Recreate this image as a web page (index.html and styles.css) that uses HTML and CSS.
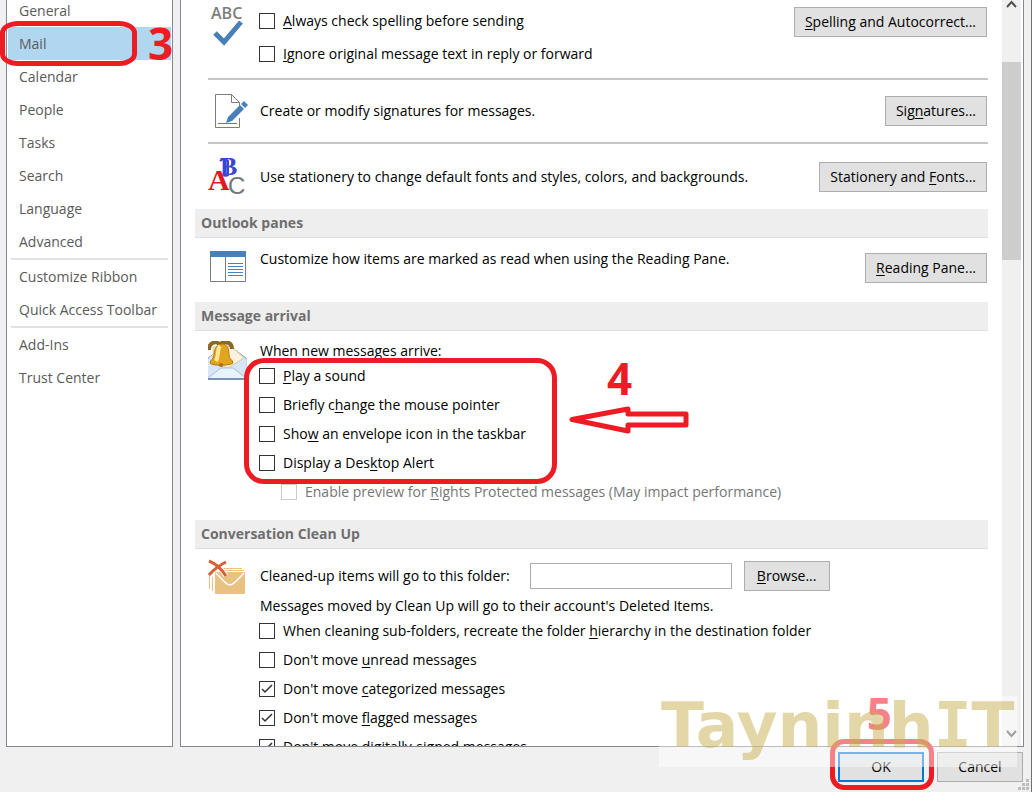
FILE: index.html
```html
<!DOCTYPE html>
<html lang="en">
<head>
    <meta charset="UTF-8">
    <meta name="viewport" content="width=device-width, initial-scale=1.0">
    <title>Outlook Options</title>
    <link rel="stylesheet" href="styles.css">
</head>
<body>
    <div class="dialog">
        <div class="panes">
            <nav class="sidebar">
                <ul class="nav-list">
                    <li><a href="#">General</a></li>
                    <li><a href="#" class="active">Mail</a></li>
                    <li><a href="#">Calendar</a></li>
                    <li><a href="#">People</a></li>
                    <li><a href="#">Tasks</a></li>
                    <li><a href="#">Search</a></li>
                    <li><a href="#">Language</a></li>
                    <li><a href="#">Advanced</a></li>
                    <li class="divided"><a href="#">Customize Ribbon</a></li>
                    <li><a href="#">Quick Access Toolbar</a></li>
                    <li class="divided"><a href="#">Add-Ins</a></li>
                    <li><a href="#">Trust Center</a></li>
                </ul>
            </nav>
            <main class="content">
                <div class="scroll-area">
                    <section class="row spelling">
                        <svg class="icon" width="40" height="44" viewBox="0 0 40 44">
                            <text x="3" y="15" class="abc">ABC</text>
                            <path d="M7 29l9 9 17-20" fill="none" stroke="#4a80b8" stroke-width="5"/>
                        </svg>
                        <div class="options wide">
                            <label><input type="checkbox"><span><u>A</u>lways check spelling before sending</span></label>
                            <label><input type="checkbox"><span><u>I</u>gnore original message text in reply or forward</span></label>
                        </div>
                        <button type="button"><u>S</u>pelling and Autocorrect...</button>
                    </section>
                    <section class="row lined">
                        <svg class="icon" width="40" height="40" viewBox="0 0 40 40">
                            <path d="M31.500 27v9.500h-24v-33h16l8 8v5M23.500 3.500v8h8" fill="#fff" stroke="#7d7d7d"/>
                            <path d="M10 32.500h19" stroke="#4a80b8"/>
                            <path d="M18 32l2-6 12-12 4 4-12 12zM33 13l3-3 4 4-3 3z" fill="#4a80b8"/>
                        </svg>
                        <p>Create or modify signatures for messages.</p>
                        <button type="button">Sig<u>n</u>atures...</button>
                    </section>
                    <section class="row lined last">
                        <svg class="icon" width="40" height="44" viewBox="0 0 40 44">
                            <text x="12" y="20" class="letter-b">B</text>
                            <path d="M12 6q4-4 8 0v14q-4 2-6-1" fill="none" stroke="#3a45d8" stroke-width="2"/>
                            <text x="20" y="39" class="letter-c">C</text>
                            <text x="0" y="35" class="letter-a">A</text>
                        </svg>
                        <p>Use stationery to change default fonts and styles, colors, and backgrounds.</p>
                        <button type="button">Stationery and <u>F</u>onts...</button>
                    </section>

                    <h2>Outlook panes</h2>
                    <section class="row reading">
                        <svg class="icon" width="40" height="40" viewBox="0 0 40 40">
                            <path d="M2.500 6.500h35v26h-35zM17.500 6v26" fill="#fff" stroke="#7d7d7d"/>
                            <path d="M2 2h36v6H2z" fill="#4a80b8"/>
                            <path d="M20 14.500h15M20 17.500h15M20 20.500h15M20 23.500h15M20 26.500h15" stroke="#4a80b8"/>
                        </svg>
                        <p>Customize how items are marked as read when using the Reading Pane.</p>
                        <button type="button"><u>R</u>eading Pane...</button>
                    </section>

                    <h2>Message arrival</h2>
                    <section class="row arrival">
                        <svg class="icon" width="40" height="40" viewBox="0 0 40 40">
                            <path d="M0 17L19 3l19 14v21H0z" fill="#d6e6f5" stroke="#8fa9c6"/>
                            <path d="M5 22V6h19l12 11-16 10z" fill="#fbf3df" stroke="#d8c7a0"/>
                            <path d="M0 18l14 10h10l14-10v20H0z" fill="#d6e6f6"/>
                            <path d="M0 37l13-10h12l13 10" fill="#e9f3fc" stroke="#a9c1da"/>
                            <path d="M0 38h38" stroke="#7794b5" stroke-width="2"/>
                            <path d="M1 9c0-9 9-9 11-5 2-5 12-4 12 4" fill="none" stroke="#8a6a22" stroke-width="4"/>
                            <path d="M14 3c-6 0-8 6-8 11 0 4-4 5-4 8 2 3 20 3 23 0 0-3-4-4-4-8 0-5-1-11-7-11z" fill="#e3a51e" stroke="#b5780f"/>
                            <path d="M12 5c-3 3-1 9-4 15" fill="none" stroke="#ffe79a" stroke-width="4"/>
                            <circle cx="13" cy="24" r="2" fill="#a8700c"/>
                        </svg>
                        <div class="options">
                            <p>When new messages arrive:</p>
                            <label><input type="checkbox"><span><u>P</u>lay a sound</span></label>
                            <label><input type="checkbox"><span>Briefly c<u>h</u>ange the mouse pointer</span></label>
                            <label><input type="checkbox"><span>Sho<u>w</u> an envelope icon in the taskbar</span></label>
                            <label><input type="checkbox"><span>Display a Des<u>k</u>top Alert</span></label>
                            <label class="nested"><input type="checkbox" disabled><span>Enable preview for <u>R</u>ights Protected messages (May impact performance)</span></label>
                        </div>
                    </section>

                    <h2>Conversation Clean Up</h2>
                    <section class="row cleanup">
                        <svg class="icon" width="40" height="40" viewBox="0 0 40 40">
                            <path d="M1.500 16v14M4.500 18v14M14 9.500h20M16 11.500h20" stroke="#e9c181"/>
                            <path d="M7 13h30v22H7z" fill="#e9c181"/>
                            <path d="M8 14c8 8 10 12 14 12s7-5 14-12" fill="none" stroke="#fff" stroke-width="1.500"/>
                            <path d="M1 2q10 4 17 15M18 3Q8 8 1 16" fill="none" stroke="#fff" stroke-width="5"/>
                            <path d="M1 2q10 4 17 15M18 3Q8 8 1 16" fill="none" stroke="#d8603a" stroke-width="3"/>
                        </svg>
                        <div class="options">
                            <div class="folder">
                                <label for="folder">Cleaned-up items will go to this folder:</label>
                                <input type="text" id="folder">
                                <button type="button"><u>B</u>rowse...</button>
                            </div>
                            <p>Messages moved by Clean Up will go to their account's Deleted Items.</p>
                            <label><input type="checkbox"><span>When cleaning sub-folders, recreate the folder <u>h</u>ierarchy in the destination folder</span></label>
                            <label><input type="checkbox"><span>Don't move <u>u</u>nread messages</span></label>
                            <label><input type="checkbox" checked><span>Don't move <u>c</u>ategorized messages</span></label>
                            <label><input type="checkbox" checked><span>Don't move <u>f</u>lagged messages</span></label>
                            <label><input type="checkbox" checked><span>Don't move <u>d</u>igitally-signed messages</span></label>
                        </div>
                    </section>
                </div>
                <div class="scrollbar">
                    <svg width="11" height="8" viewBox="0 0 11 8"><path d="M1 7l4.500-5L10 7" fill="none" stroke="#505050" stroke-width="2"/></svg>
                    <div class="track"><div class="thumb"></div></div>
                    <svg width="11" height="8" viewBox="0 0 11 8"><path d="M1 1l4.500 5L10 1" fill="none" stroke="#505050" stroke-width="2"/></svg>
                </div>
            </main>
        </div>
        <footer>
            <button type="button" class="default">OK</button>
            <button type="button">Cancel</button>
        </footer>
        <svg class="grip" width="12" height="12" viewBox="0 0 12 12">
            <path d="M8 0h3v3H8zM4 4h3v3H4zM8 4h3v3H8zM0 8h3v3H0zM4 8h3v3H4zM8 8h3v3H8z" fill="#bdbdbd"/>
        </svg>
    </div>

    <!-- step markers -->
    <div class="ring ring-mail"></div>
    <span class="step step-3">3</span>
    <div class="ring ring-arrival"></div>
    <span class="step step-4">4</span>
    <svg class="arrow" width="120" height="28" viewBox="0 0 120 28">
        <path d="M3 13.500L59 3v5h58v11H59v6z" fill="none" stroke="#ed1c24" stroke-width="5" stroke-linejoin="round"/>
    </svg>
    <div class="ring ring-ok"></div>
    <span class="step step-5">5</span>
    <div class="watermark">Tayninh<span>I</span>T</div>
</body>
</html>
```
FILE: styles.css
```css
* {
    box-sizing: border-box;
}

body {
    font-family: "Open Sans", "Noto Sans", sans-serif;
    font-size: 14px;
    line-height: 20px;
    color: #000;
    margin: 0;
    height: 100vh;
    overflow: hidden;
    position: relative;
}

p, h2, ul {
    margin: 0;
    padding: 0;
}

u {
    text-underline-offset: 2px;
}

.dialog {
    display: flex;
    flex-direction: column;
    height: 100%;
    background-color: #f0f0f0;
    border-right: 1px solid #707070;
    position: relative;
}

.panes {
    display: flex;
    flex: 1;
    min-height: 0;
    gap: 7px;
    padding: 0 7px 0 6px;
}

.sidebar {
    width: 167px;
    background-color: #fff;
    border: 1px solid #828790;
    border-top: none;
    overflow: hidden;
}

/* the list is scrolled a little, so General is cut at the top */
.nav-list {
    list-style: none;
    margin-top: -6px;
}

.nav-list a {
    display: block;
    height: 33px;
    line-height: 33px;
    margin: 0 1px;
    padding-left: 11px;
    color: #5a5a5a;
    text-decoration: none;
    white-space: nowrap;
}

.nav-list a.active {
    background-color: #b1d6f0;
}

.divided::before {
    content: "";
    display: block;
    height: 2px;
    margin: 0 4px;
    background-color: #e1e1e1;
}

.content {
    flex: 1;
    display: flex;
    min-width: 0;
    background-color: #fff;
    border: 1px solid #828790;
    border-top: none;
}

.scroll-area {
    flex: 1;
    min-width: 0;
    padding: 0 14px;
    overflow: hidden;
}

h2 {
    height: 29px;
    padding-left: 6px;
    font-size: 14px;
    line-height: 28px;
    color: #6e6e6e;
    background-color: #eee;
    border-bottom: 1px solid #dedede;
}

.row {
    display: grid;
    grid-template-columns: 52px 1fr auto;
    align-items: center;
    margin-left: 13px;
    padding-right: 1px;
}

.icon {
    display: block;
}

.spelling {
    height: 78px;
    padding-top: 4px;
    align-items: start;
}

.spelling button {
    margin-top: 3px;
}

.lined {
    height: 64px;
    border-top: 2px solid #c6c6c6;
}

.lined.last {
    height: 67px;
}

.reading {
    height: 64px;
    padding-top: 11px;
    align-items: start;
}

.reading button {
    margin-top: 4px;
}

.arrival,
.cleanup {
    align-items: start;
    padding-top: 10px;
}

.arrival {
    height: 189px;
}

.options label {
    display: flex;
    align-items: center;
    gap: 8px;
    height: 29px;
    white-space: nowrap;
}

.options.wide label {
    height: 33px;
}

.options label.nested {
    padding-left: 22px;
    color: #767676;
}

.options input[type="checkbox"] {
    appearance: none;
    width: 16px;
    height: 16px;
    margin: 0 0 0 -1px;
    border: 1px solid #333;
    background-color: #fff;
}

.options input[type="checkbox"]:disabled {
    border-color: #ccc;
}

.options input[type="checkbox"]:checked {
    background-image: url("data:image/svg+xml,%3Csvg xmlns='http://www.w3.org/2000/svg' viewBox='0 0 14 14'%3E%3Cpath d='M2 7l3 3 7-7' fill='none' stroke='%23333' stroke-width='1.5'/%3E%3C/svg%3E");
}

.options .folder {
    display: flex;
    align-items: center;
    height: 34px;
    margin-bottom: 3px;
}

.folder input {
    width: 202px;
    height: 26px;
    margin: 0 12px 0 20px;
    border: 1px solid #ababab;
    font: inherit;
}

button {
    height: 30px;
    min-width: 86px;
    padding: 0 10px;
    font: inherit;
    color: #000;
    background-color: #e1e1e1;
    border: 1px solid #adadad;
}

.scrollbar {
    display: flex;
    flex-direction: column;
    align-items: center;
    width: 19px;
    margin-right: 2px;
    padding-bottom: 8px;
    background-color: #f0f0f0;
}

.track {
    flex: 1;
    width: 100%;
    padding: 54px 0;
}

.thumb {
    height: 198px;
    background-color: #cdcdcd;
}

footer {
    display: flex;
    justify-content: flex-end;
    gap: 13px;
    padding: 5px 8px 10px;
}

button.default {
    border: 2px solid #0078d7;
}

.grip {
    position: absolute;
    right: 1px;
    bottom: 1px;
}

.abc {
    font-size: 16px;
    font-weight: 600;
    fill: #7d7d7d;
}

.letter-a,
.letter-b,
.letter-c {
    font-family: "Liberation Serif", serif;
    font-weight: bold;
    font-size: 30px;
    fill: #e01820;
}

.letter-b {
    font-size: 26px;
    fill: #3a45d8;
}

.letter-c {
    font-family: "Liberation Sans", sans-serif;
    font-weight: normal;
    font-size: 24px;
    fill: #777;
}

/* step markers */
.ring {
    position: absolute;
    border: 5px solid #ed1c24;
    border-radius: 20px;
}

.ring-mail {
    left: 0;
    top: 21px;
    width: 137px;
    height: 45px;
    border-radius: 18px / 12px;
}

.ring-arrival {
    left: 244px;
    top: 358px;
    width: 313px;
    height: 126px;
}

.ring-ok {
    right: 98px;
    bottom: 2px;
    width: 104px;
    height: 51px;
    border-radius: 14px;
}

.step {
    position: absolute;
    font-size: 44px;
    font-weight: bold;
    line-height: 44px;
    color: #ed1c24;
}

.step-3 {
    left: 148px;
    top: 21px;
}

.step-4 {
    left: 607px;
    top: 356px;
}

.step-5 {
    right: 140px;
    bottom: 57px;
}

.arrow {
    position: absolute;
    left: 569px;
    top: 406px;
}

.watermark {
    position: absolute;
    right: 15px;
    bottom: 25px;
    width: 358px;
    height: 71px;
    padding-left: 2px;
    font-family: "DejaVu Sans", sans-serif;
    font-size: 63px;
    font-weight: bold;
    line-height: 60px;
    color: rgba(200, 176, 80, 0.5);
    background-color: rgba(255, 255, 255, 0.45);
    white-space: nowrap;
}

.watermark span {
    font-family: "DejaVu Sans Mono", monospace;
}
```
